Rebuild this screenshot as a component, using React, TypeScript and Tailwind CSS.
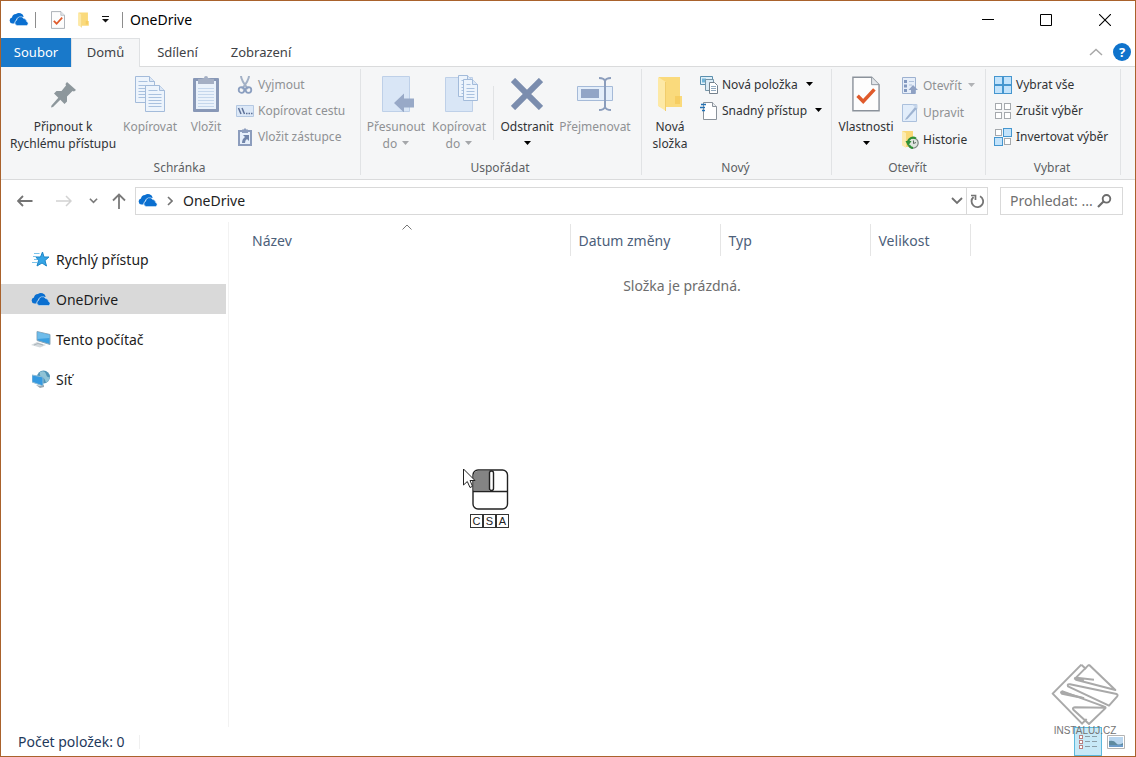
import type { ReactNode } from "react";

const text14 = "text-[14px] leading-[20px]";

function CloudIcon({ className = "w-5 h-4" }: { className?: string }) {
  return (
    <svg viewBox="0 0 20 14" className={className} aria-hidden="true">
      <path d="M5.6 11H3.4A3.2 3.2 0 0 1 .6 8a3.1 3.1 0 0 1 2.400-3A4.200 4.200 0 0 1 7 1.400 5.200 5.200 0 0 1 14.800 4.200L11 4.500A4.500 4.500 0 0 0 6.900 7.800 3.400 3.400 0 0 0 5.600 11Z" fill="#0a6fd0" />
      <path d="M8.400 13a2.700 2.700 0 0 1-.8-5.200 3.800 3.800 0 0 1 7-1.900 3.300 3.300 0 0 1 3 3.100 2.100 2.100 0 0 1 0 4Z" fill="#0a6fd0" stroke="#d5e9fa" strokeWidth=".6" />
    </svg>
  );
}

function CheckPageIcon({ className }: { className: string }) {
  return (
    <svg viewBox="0 0 30 38" className={className} aria-hidden="true">
      <path d="M1 1H21L29 9V37H1Z" fill="#fdfdfd" stroke="#8b929b" strokeWidth="1.500" />
      <path d="M21 1V9H29" fill="#e3e6ea" stroke="#8b929b" />
      <path d="M6 21l6 6L24 14" fill="none" stroke="#df5a2b" strokeWidth="3.800" />
    </svg>
  );
}

function FolderIcon({ className }: { className: string }) {
  return (
    <svg viewBox="0 0 26 36" className={className} aria-hidden="true">
      <path d="M2 1H23V20H25V31H8L2 31Z" fill="#fada7c" />
      <path d="M1 1l8 5v29L1 30Z" fill="#fde9a6" />
      <path d="M8.500 6v29" stroke="#f1cd6c" />
      <path d="M18 20h5v8h-5z" fill="#f6cd62" />
    </svg>
  );
}

function Caret({ className = "text-black" }: { className?: string }) {
  return (
    <svg viewBox="0 0 7 4" className={`inline-block h-1 w-[7px] shrink-0 ${className}`} aria-hidden="true">
      <path d="M0 0h7L3.500 4Z" fill="currentColor" />
    </svg>
  );
}

function PinIcon() {
  return (
    <svg viewBox="-1 0 28 28" className="h-7 w-7" aria-hidden="true">
      <path d="M17 2l9 8-2 1.500-1.500-.5-5.500 5.500v5l-2.500 2.500-4.200-4.200L3 27l-2 .5.5-2 6.800-7.700L4 13.500 6.500 11h5L16 5.500 15.500 4Z" fill="#8d979c" />
    </svg>
  );
}

function Page({ x, y, w, h }: { x: number; y: number; w: number; h: number }) {
  const lines = [];
  for (let i = 9; i < h - 2; i += 3) lines.push(i);
  return (
    <g>
      <path d={`M${x} ${y}h${w - 5}l5 5v${h - 5}h${-w}Z`} fill="#edf4fc" stroke="#a3bbda" />
      <path d={`M${x + w - 5} ${y}v5h5`} fill="#dce7f5" stroke="#a3bbda" />
      {lines.map((i) => (
        <path key={i} d={`M${x + 3} ${y + i}h${w - 6}`} stroke="#a9c1df" />
      ))}
      <path d={`M${x + 3} ${y + 5}h${w - 10}`} stroke="#a9c1df" />
    </g>
  );
}

function CopyIcon() {
  return (
    <svg viewBox="0 0 30 36" className="h-9 w-[30px]" aria-hidden="true">
      <Page x={0.5} y={0.5} w={19} h={26} />
      <Page x={10.5} y={9.5} w={19} h={26} />
    </svg>
  );
}

function PasteIcon() {
  return (
    <svg viewBox="0 0 26 38" className="h-[38px] w-[26px]" aria-hidden="true">
      <rect x="0" y="3" width="26" height="34" rx="1" fill="#8898b7" />
      <rect x="3" y="6" width="20" height="28" fill="#eaf2fb" />
      <path d="M5 4h3l3-1a2 2 0 0 1 4 0l3 1h3v5H5Z" fill="#a4afc4" />
      {[13, 16, 19, 22, 25, 28, 31].map((y) => (
        <path key={y} d={`M5 ${y}.5h16`} stroke="#c5d7ec" />
      ))}
    </svg>
  );
}

function MoveIcon() {
  return (
    <svg viewBox="-7 0 42 36" className="h-9 w-[42px]" aria-hidden="true">
      <path d="M.5.5h27v35H.5Z" fill="#d9e6f6" stroke="#bed0e8" />
      <path d="M12 27l10-9.500V22.500h10v9H22V36.500Z" fill="#98a9c7" />
    </svg>
  );
}

function CopyToIcon() {
  return (
    <svg viewBox="-7 0 42 38" className="h-[38px] w-[42px]" aria-hidden="true">
      <path d="M.5 2.500h27v34H.5Z" fill="#d9e6f6" stroke="#bed0e8" />
      <Page x={13.5} y={0.5} w={14} h={21} />
      <Page x={18.5} y={4.5} w={14} h={21} />
    </svg>
  );
}

function DeleteIcon() {
  return (
    <svg viewBox="0 0 32 32" className="h-8 w-8" aria-hidden="true">
      <path d="M2 2l28 28M30 2L2 30" stroke="#7b8dae" strokeWidth="6" />
    </svg>
  );
}

function RenameIcon() {
  return (
    <svg viewBox="0 0 37 34" className="h-[34px] w-[37px]" aria-hidden="true">
      <path d="M.5 9.500h35v14H.5Z" fill="#e4eefa" stroke="#a5bad8" />
      <path d="M4 12h18v9H4Z" fill="#92a5c6" />
      <path d="M22 1q5 0 6 3q1-3 6-3M28 4v26M22 33q5 0 6-3q1 3 6 3" fill="none" stroke="#8b9dbc" strokeWidth="2" />
    </svg>
  );
}

function ScissorsIcon() {
  return (
    <svg viewBox="0 0 16 18" className="h-[18px] w-4" aria-hidden="true">
      <path d="M4 0q0 4 7 13M12 0q0 4-7 13" fill="none" stroke="#a3b1c6" strokeWidth="2" />
      <circle cx="4.500" cy="14" r="2.800" fill="none" stroke="#8b9fc0" strokeWidth="1.800" />
      <circle cx="11.500" cy="14" r="2.800" fill="none" stroke="#8b9fc0" strokeWidth="1.800" />
    </svg>
  );
}

function PathIcon() {
  return (
    <svg viewBox="0 0 18 12" className="h-3 w-[18px]" aria-hidden="true">
      <path d="M.5.500h17v11H.5Z" fill="#dce8f7" stroke="#b4c8e2" />
      <path d="M2.500 3l2.500 6M6 3l2.500 6" stroke="#5e7198" strokeWidth="1.500" />
      <path d="M10 8.500h1.500M12.500 8.500H14M15 8.500h1.500" stroke="#5e7198" strokeWidth="1.300" />
    </svg>
  );
}

function ShortcutIcon() {
  return (
    <svg viewBox="0 0 14 18" className="h-[18px] w-3.5" aria-hidden="true">
      <path d="M1 3h12v14H1Z" fill="#e7f0fb" stroke="#8c9dbd" strokeWidth="2" />
      <path d="M4 1.500h1.500L7 0l1.500 1.500H10V5H4Z" fill="#8c9dbd" />
      <path d="M5 7h6v6l-2-2q-2 1-2 4H4q0-4 3-6Z" fill="#7185aa" />
    </svg>
  );
}

function NewItemIcon() {
  return (
    <svg viewBox="0 0 18 18" className="h-[18px] w-[18px]" aria-hidden="true">
      <path d="M.5.500h12v8H.5Z" fill="#dff0fa" stroke="#5b8fae" />
      <path d="M2 2.500h4v4H2Z" fill="#71b4d8" />
      <path d="M5.500 3.500h8v11h-8Z" fill="#dcebf5" stroke="#7595a8" />
      <path d="M9.500 6.500h5l3 3v8h-8Z" fill="#fff" stroke="#74818c" />
      <path d="M11 10.500h5M11 12.500h5M11 14.500h5" stroke="#91a9be" />
    </svg>
  );
}

function EasyAccessIcon() {
  return (
    <svg viewBox="0 0 18 18" className="h-[18px] w-[18px]" aria-hidden="true">
      <path d="M3.500.5h9l4 4v13h-13Z" fill="#fff" stroke="#8a929a" />
      <path d="M12.500.5v4h4" fill="#e9ecef" stroke="#8a929a" />
      <path d="M1 2.500h5M0 5.500h5M2 8.500h3" stroke="#2272b5" strokeWidth="1.500" />
    </svg>
  );
}

function OpenIcon() {
  return (
    <svg viewBox="0 0 16 18" className="h-[18px] w-4" aria-hidden="true">
      <path d="M.5.500h13v16H.5Z" fill="#e6eef9" stroke="#9db1d0" />
      <path d="M2 3h3v3H2zM2 7.500h3v3H2zM2 12h3v3H2z" fill="#8298bf" />
      <path d="M7 4.500h5M7 8h3" stroke="#b0c2dc" />
      <path d="M11 8l5 5h-3v4H9v-4H6.500Z" fill="#8fa1c3" />
    </svg>
  );
}

function EditIcon() {
  return (
    <svg viewBox="0 0 16 18" className="h-[18px] w-4" aria-hidden="true">
      <path d="M.5.500h14v17H.5Z" fill="#e2edfa" stroke="#abc0dc" />
      <path d="M4 14L13 3l2 1.500L5.500 15 3 16Z" fill="#9eb3d1" />
      <path d="M10 .5l5.500 4.500V.5Z" fill="#c4d4e9" />
    </svg>
  );
}

function HistoryIcon() {
  return (
    <svg viewBox="0 0 17 19" className="h-[19px] w-[17px]" aria-hidden="true">
      <path d="M0 1h11v16H3L0 15Z" fill="#f9d977" />
      <path d="M0 1l4 2v15l-4-3Z" fill="#fcebb0" />
      <circle cx="11" cy="13" r="5.200" fill="#dfe5df" stroke="#7c8780" strokeWidth="1.200" />
      <path d="M14 8.500a5.200 5.200 0 0 0-8 4M11 18a5 5 0 0 1-4-3" fill="none" stroke="#2f9136" strokeWidth="2" />
      <path d="M3.500 11h6L6 16Z" fill="#2f9136" />
      <path d="M11.500 10.500v3l2.500-1" fill="none" stroke="#5c6a62" />
    </svg>
  );
}

function SquaresIcon({ filled }: { filled: boolean[] }) {
  const spots = [
    [1, 1],
    [10, 1],
    [1, 10],
    [10, 10],
  ];
  return (
    <svg viewBox="0 0 18 18" className="h-[18px] w-[18px]" aria-hidden="true">
      {spots.map(([x, y], i) =>
        filled[i] ? (
          <rect key={i} x={x - 0.5} y={y - 0.5} width="8" height="8" fill="#c3e3fb" stroke="#4596cf" />
        ) : (
          <rect key={i} x={x + 0.5} y={y + 0.5} width="6" height="6" fill="#fff" stroke="#a5a9ad" />
        )
      )}
    </svg>
  );
}

function BigButton({
  icon,
  children,
  width,
  disabled,
}: {
  icon: ReactNode;
  children: ReactNode;
  width: string;
  disabled?: boolean;
}) {
  return (
    <button
      type="button"
      disabled={disabled}
      className={`flex flex-col items-center gap-1 whitespace-nowrap text-center leading-[17px] ${width} ${
        disabled ? "text-[#8f9194]" : "text-[#303235]"
      }`}
    >
      <span className="flex h-10 items-center justify-center">{icon}</span>
      <span>{children}</span>
    </button>
  );
}

function SmallButton({
  icon,
  label,
  disabled,
  caret,
  height = "h-[26px]",
}: {
  icon: ReactNode;
  label: string;
  disabled?: boolean;
  caret?: boolean;
  height?: string;
}) {
  return (
    <button
      type="button"
      disabled={disabled}
      className={`flex items-center gap-1 whitespace-nowrap ${height} ${disabled ? "text-[#8f9194]" : "text-[#303235]"}`}
    >
      <span className="flex w-[18px] justify-center">{icon}</span>
      <span>{label}</span>
      {caret && <Caret className={disabled ? "mb-0.5 ml-0.5 text-[#b0b2b5]" : "mb-0.5 ml-1 text-black"} />}
    </button>
  );
}

function Group({ title, width, children }: { title: string; width: string; children: ReactNode }) {
  return (
    <section
      aria-label={title}
      className={`flex shrink-0 flex-col border-r border-[#e1e3e5] ${width}`}
    >
      <div className="flex h-[92px] shrink-0 items-start pt-[3px]">{children}</div>
      <h2 className="pr-0.5 text-center leading-[14px] text-[#5c5f63]">{title}</h2>
    </section>
  );
}

function TitleBar() {
  return (
    <header className="flex h-[37px] items-center pl-2">
      <CloudIcon className="h-[15px] w-5" />
      <span className="ml-1.5 h-4 w-px bg-[#8d8d8d]" />
      <button type="button" aria-label="Vlastnosti" className="ml-[15px]">
        <CheckPageIcon className="h-[18px] w-[14px]" />
      </button>
      <button type="button" aria-label="Nová složka" className="ml-3">
        <FolderIcon className="h-4 w-[13px]" />
      </button>
      <button type="button" aria-label="Přizpůsobit" className="ml-3">
        <svg viewBox="0 0 7 7" className="h-[7px] w-[7px]">
          <path d="M0 .5h7" stroke="#111" />
          <path d="M0 3h7L3.500 6.500Z" fill="#111" />
        </svg>
      </button>
      <span className="ml-[13px] h-4 w-px bg-[#8d8d8d]" />
      <h1 className={`ml-[7px] flex-1 text-black ${text14}`}>OneDrive</h1>
      <button type="button" aria-label="Minimalizovat" className="flex h-full w-[58px] items-center justify-center">
        <svg viewBox="0 0 12 12" className="h-3 w-3">
          <path d="M0 5.500h12" stroke="#000" />
        </svg>
      </button>
      <button type="button" aria-label="Maximalizovat" className="flex h-full w-[58px] items-center justify-center">
        <svg viewBox="0 0 12 12" className="h-3 w-3">
          <path d="M.5.500h11v11H.5Z" fill="none" stroke="#000" />
        </svg>
      </button>
      <button type="button" aria-label="Zavřít" className="mr-px flex h-full w-[59px] items-center justify-center">
        <svg viewBox="0 0 12 12" className="h-3 w-3">
          <path d="M0 0l12 12M12 0L0 12" stroke="#000" strokeWidth="1.100" />
        </svg>
      </button>
    </header>
  );
}

function Tabs() {
  return (
    <nav className="flex h-[29px] items-stretch text-[13px] leading-[18px] text-[#404246]">
      <button type="button" className="w-[70px] border-b border-[#1979ca] bg-[#1979ca] text-white">
        Soubor
      </button>
      <button type="button" className="w-[69px] border-x border-t border-[#dfe1e3] bg-[#f5f6f7] pb-0.5">
        Domů
      </button>
      <div className="flex flex-1 items-center border-b border-[#dadbdc] pr-1">
        <button type="button" className="w-[75px]">Sdílení</button>
        <button type="button" className="w-[92px]">Zobrazení</button>
        <button type="button" aria-label="Sbalit pás karet" className="mr-2.5 ml-auto">
          <svg viewBox="0 0 14 8" className="h-2 w-3.5">
            <path d="M1 7l6-5.500L13 7" fill="none" stroke="#a8a8a8" strokeWidth="1.500" />
          </svg>
        </button>
        <button
          type="button"
          aria-label="Nápověda"
          className="h-[18px] w-[18px] rounded-full bg-[#0f73cc] text-center text-[13px] leading-[18px] font-bold text-white"
        >
          ?
        </button>
      </div>
    </nav>
  );
}

function Ribbon() {
  return (
    <div className="flex h-[113px] overflow-hidden border-b border-[#dadbdc] bg-[#f5f6f7] pt-0.5 pb-1 text-[12px]">
      <Group title="Schránka" width="w-[360px]">
        <div className="flex pt-0.5 pl-[7px]">
          <BigButton icon={<PinIcon />} width="w-[110px]">
            Připnout k<br />Rychlému přístupu
          </BigButton>
          <BigButton icon={<CopyIcon />} width="w-16" disabled>Kopírovat</BigButton>
          <BigButton icon={<PasteIcon />} width="w-12" disabled>Vložit</BigButton>
        </div>
        <div className="flex flex-col pl-1.5">
          <SmallButton icon={<ScissorsIcon />} label="Vyjmout" disabled />
          <SmallButton icon={<PathIcon />} label="Kopírovat cestu" disabled />
          <SmallButton icon={<ShortcutIcon />} label="Vložit zástupce" disabled />
        </div>
      </Group>
      <Group title="Uspořádat" width="w-[281px]">
        <div className="flex pt-0.5 pl-1">
          <BigButton icon={<MoveIcon />} width="w-[62px]" disabled>
            Přesunout<br />do <Caret className="mb-1 ml-0.5 text-[#a5a7aa]" />
          </BigButton>
          <BigButton icon={<CopyToIcon />} width="w-16" disabled>
            Kopírovat<br />do <Caret className="mb-1 ml-0.5 text-[#a5a7aa]" />
          </BigButton>
          <span className="mt-3 mr-[3px] ml-0.5 h-[54px] w-px bg-[#e1e3e5]" />
          <BigButton icon={<DeleteIcon />} width="w-[60px]">
            Odstranit<br /><Caret className="mb-1 text-black" />
          </BigButton>
          <BigButton icon={<RenameIcon />} width="w-[76px]" disabled>Přejmenovat</BigButton>
        </div>
      </Group>
      <Group title="Nový" width="w-[190px]">
        <div className="flex pt-0.5 pl-1.5">
          <BigButton icon={<FolderIcon className="h-9 w-[26px]" />} width="w-11">
            Nová<br />složka
          </BigButton>
        </div>
        <div className="flex flex-col pl-2">
          <SmallButton icon={<NewItemIcon />} label="Nová položka" caret />
          <SmallButton icon={<EasyAccessIcon />} label="Snadný přístup" caret />
        </div>
      </Group>
      <Group title="Otevřít" width="w-[154px]">
        <div className="flex pt-0.5 pl-1">
          <BigButton icon={<CheckPageIcon className="h-9 w-7" />} width="w-[60px]">
            Vlastnosti<br /><Caret className="mb-1 text-black" />
          </BigButton>
        </div>
        <div className="flex flex-col pl-[5px]">
          <SmallButton icon={<OpenIcon />} label="Otevřít" height="h-[27px]" disabled caret />
          <SmallButton icon={<EditIcon />} label="Upravit" height="h-[27px]" disabled />
          <SmallButton icon={<HistoryIcon />} label="Historie" height="h-[27px]" />
        </div>
      </Group>
      <Group title="Vybrat" width="w-[135px]">
        <div className="flex flex-col pl-2">
          <SmallButton icon={<SquaresIcon filled={[true, true, true, true]} />} label="Vybrat vše" />
          <SmallButton icon={<SquaresIcon filled={[false, false, false, false]} />} label="Zrušit výběr" />
          <SmallButton icon={<SquaresIcon filled={[false, true, true, false]} />} label="Invertovat výběr" />
        </div>
      </Group>
    </div>
  );
}

function AddressRow() {
  return (
    <div className="flex h-[42px] items-center pr-3 pl-4">
      <button type="button" aria-label="Zpět">
        <svg viewBox="0 0 16 12" className="h-3 w-4">
          <path d="M15.500 6H1M6 1L1 6l5 5" fill="none" stroke="#747474" strokeWidth="1.800" />
        </svg>
      </button>
      <button type="button" aria-label="Vpřed" className="ml-[23px]">
        <svg viewBox="0 0 16 12" className="h-3 w-4">
          <path d="M0 6h15M10 1l5 5-5 5" fill="none" stroke="#d2d2d2" strokeWidth="1.500" />
        </svg>
      </button>
      <button type="button" aria-label="Poslední umístění" className="ml-[17px]">
        <svg viewBox="0 0 10 6" className="h-1.5 w-[9px]">
          <path d="M1 .5l4 4 4-4" fill="none" stroke="#7a7a7a" strokeWidth="1.800" />
        </svg>
      </button>
      <button type="button" aria-label="Nahoru" className="ml-3.5">
        <svg viewBox="0 0 14 16" className="h-4 w-3.5">
          <path d="M7 16V1.500M1 7.500l6-6 6 6" fill="none" stroke="#7a7a7a" strokeWidth="1.800" />
        </svg>
      </button>
      <div className="ml-[9px] flex h-7 flex-1 items-center border border-[#d9d9d9]">
        <CloudIcon className="mb-0.5 ml-0.5 h-[15px] w-5" />
        <svg viewBox="0 0 6 10" className="ml-[9px] h-2.5 w-1.5" aria-hidden="true">
          <path d="M1 1l4 4-4 4" fill="none" stroke="#747474" strokeWidth="1.600" />
        </svg>
        <a href="#onedrive" className={`ml-2.5 flex-1 text-[#222] ${text14}`}>OneDrive</a>
        <button type="button" aria-label="Předchozí umístění" className="mr-[3px]">
          <svg viewBox="0 0 12 8" className="h-2 w-3">
            <path d="M1 1l5 5 5-5" fill="none" stroke="#707070" strokeWidth="1.800" />
          </svg>
        </button>
        <button
          type="button"
          aria-label="Aktualizovat"
          className="flex h-full w-[21px] items-center justify-center border-l border-[#d9d9d9]"
        >
          <svg viewBox="0 0 14 16" className="h-4 w-3.5">
            <path d="M10 3.200A5.800 5.800 0 1 1 3.500 4" fill="none" stroke="#757575" strokeWidth="1.800" />
            <path d="M1 2.500h4.500V7" fill="none" stroke="#757575" strokeWidth="1.700" />
          </svg>
        </button>
      </div>
      <form className="ml-3 flex h-7 w-[123px] items-center border border-[#d9d9d9]" onSubmit={(e) => e.preventDefault()}>
        <input
          type="text"
          aria-label="Prohledat"
          placeholder="Prohledat: ..."
          className={`w-24 bg-transparent pl-[9px] text-[#333] outline-none placeholder:text-[#707070] ${text14}`}
        />
        <button type="submit" aria-label="Hledat">
          <svg viewBox="0 0 15 14" className="h-3.5 w-[15px]">
            <circle cx="9.500" cy="4.800" r="3.800" fill="none" stroke="#6c6c6c" strokeWidth="1.900" />
            <path d="M6.500 7.500L1 13" stroke="#6c6c6c" strokeWidth="2.200" />
          </svg>
        </button>
      </form>
    </div>
  );
}

function StarIcon() {
  return (
    <svg viewBox="0 0 18 16" className="h-4 w-[18px]" aria-hidden="true">
      <path d="M10.500 1l1.500 5H17l-4 3.500 1.500 5.500L10 12l-5 3 1.500-5.500L4 6h4.500Z" fill="#35a5e6" stroke="#1f86c7" />
      <path d="M2 2.500h5.500M1 5.500h4M2 8.500h3M0 11.500h5" stroke="#7cc3ea" />
    </svg>
  );
}

function ComputerIcon() {
  return (
    <svg viewBox="0 0 20 17" className="h-[17px] w-5" aria-hidden="true">
      <path d="M6 .5l13 3v10L6 9.500Z" fill="#3b9fe0" stroke="#8fa9ba" />
      <path d="M6.500 1l12 3v3l-12 1Z" fill="#6fbcea" />
      <path d="M0 14l6-3 9 3-6 2.500Z" fill="#d3d9dd" />
      <path d="M3 14l4-1.500 5 1.500" stroke="#aab4ba" fill="none" />
    </svg>
  );
}

function NetworkIcon() {
  return (
    <svg viewBox="0 0 19 18" className="h-[18px] w-[19px]" aria-hidden="true">
      <circle cx="11.500" cy="7" r="6.500" fill="#4f93b6" />
      <path d="M8 2q5-2 6 2t4 3q-1 4-4 6-1-5-4-6T8 2Z" fill="#8fc3d6" />
      <path d="M0 5l11 2v9L0 12Z" fill="#3499e0" stroke="#8fbcd5" />
      <path d="M4 15l5 1 3-1v2l-4 1Z" fill="#9aa9b2" />
    </svg>
  );
}

const places = [
  { label: "Rychlý přístup", icon: <StarIcon /> },
  { label: "OneDrive", icon: <CloudIcon className="h-[15px] w-5" />, active: true },
  { label: "Tento počítač", icon: <ComputerIcon /> },
  { label: "Síť", icon: <NetworkIcon /> },
];

function Sidebar() {
  return (
    <nav className="w-[228px] shrink-0 border-r border-[#f2f2f2] pt-[22px] pr-0.5">
      <ul className="flex flex-col gap-2.5">
        {places.map((p) => (
          <li key={p.label}>
            <a
              href="#place"
              className={`flex h-[30px] items-center gap-[5px] pl-[30px] text-[#1c1c1c] ${text14} ${
                p.active ? "bg-[#d9d9d9]" : ""
              }`}
            >
              <span className="flex w-5 justify-center">{p.icon}</span>
              <span className="pt-0.5">{p.label}</span>
            </a>
          </li>
        ))}
      </ul>
    </nav>
  );
}

function FileList() {
  return (
    <main className="flex-1">
      <table className={`mt-0.5 w-full table-fixed border-collapse ${text14}`}>
        <thead>
          <tr className="h-8 text-left text-[#4c607a]">
            <th scope="col" className="relative w-[341px] border-r border-[#e5e5e5] pt-0.5 pl-[23px] font-normal">
              Název
              <svg viewBox="0 0 10 6" className="absolute top-0 left-1/2 ml-[3px] h-1.5 w-[10px]" aria-hidden="true">
                <path d="M.5 5.500L5 1l4.500 4.500" fill="none" stroke="#777" />
              </svg>
            </th>
            <th scope="col" className="w-[150px] border-r border-[#e5e5e5] pt-0.5 pl-2 font-normal">Datum změny</th>
            <th scope="col" className="w-[150px] border-r border-[#e5e5e5] pt-0.5 pl-2 font-normal">Typ</th>
            <th scope="col" className="w-[100px] border-r border-[#e5e5e5] pt-0.5 pl-2 font-normal">Velikost</th>
            <td />
          </tr>
        </thead>
        <tbody>
          <tr>
            <td colSpan={5} className="pt-5 text-center text-[#6d6d6d]">Složka je prázdná.</td>
          </tr>
        </tbody>
      </table>
    </main>
  );
}

function StatusBar() {
  return (
    <footer className={`flex h-[29px] items-center pr-2.5 pl-[17px] text-[#1e395b] ${text14}`}>
      <span>Počet položek: 0</span>
      <span className="ml-3.5 h-3.5 w-px bg-[#f0f0f0]" />
      <button
        type="button"
        aria-label="Podrobnosti"
        className="ml-auto flex h-full w-7 items-center justify-center border border-[#5bb9dd] bg-[#c7e9f7]"
      >
        <svg viewBox="0 0 20 16" className="h-4 w-5">
          {[1, 6, 11].map((y) => (
            <g key={y}>
              <rect x="1.500" y={y + 0.5} width="3" height="3" fill="#fff" stroke="#b98080" />
              <path d={`M7 ${y + 1.5}h5M14 ${y + 1.5}h5`} stroke="#8b9da6" />
            </g>
          ))}
        </svg>
      </button>
      <button type="button" aria-label="Velké ikony" className="ml-[5px]">
        <svg viewBox="0 0 18 14" className="h-3.5 w-[18px]">
          <path d="M.5.500h17v13H.5Z" fill="#fff" stroke="#b4b4b4" />
          <path d="M2 2h14v10H2Z" fill="#b9d6ef" />
          <path d="M2 6q5-1 7 2t7 0v3H2Z" fill="#5f8a9f" />
          <path d="M2 10h14v2H2Z" fill="#6c9bc9" />
        </svg>
      </button>
    </footer>
  );
}

function MouseOverlay() {
  return (
    <div className="pointer-events-none absolute top-[467px] left-[461px] flex flex-col items-end">
      <svg viewBox="0 0 48 44" className="h-11 w-12" aria-hidden="true">
        <rect x="11" y="2" width="34.500" height="39" rx="5" fill="#fff" stroke="#222" strokeWidth="1.400" />
        <path d="M16 2.700h11v20H11.700V7a5 5 0 0 1 4.300-4.300Z" fill="#848484" />
        <path d="M11 23.500h34.500" stroke="#222" strokeWidth="1.400" />
        <rect x="27.500" y="3" width="4" height="19.500" rx="2" fill="#fff" stroke="#222" strokeWidth="1.400" />
        <path d="M1.500 1v16l3.800-3.500 2.700 6 2.500-1.200-2.500-5.800h5Z" fill="#fff" stroke="#222" />
      </svg>
      <div className="mt-0.5 flex pr-px font-['Liberation_Sans',sans-serif] text-[11px] leading-[12px] text-[#222]">
        {["C", "S", "A"].map((k) => (
          <span key={k} className="w-[13px] border border-[#333] text-center">{k}</span>
        ))}
      </div>
    </div>
  );
}

function Watermark() {
  return (
    <div className="pointer-events-none absolute right-4 bottom-[19px] flex flex-col items-center">
      <svg viewBox="46 22 204 186" className="h-[62px] w-[68px]" aria-hidden="true">
        <g fill="none" stroke="#a9a9a9" strokeWidth="6" strokeLinejoin="round">
          <path d="M137 27L51 114l88 90 14-14" />
          <path d="M137 27l14 13" />
          <path d="M160 27l79 76-118-31q-5-4 2-6l52 6" />
          <path d="M160 27l-42 42" />
          <path d="M145 74l-30-6" />
          <path d="M97 92q-3-8 6-6l140 29q5 3 1 8l-24 27L97 92Z" />
          <path d="M145 128l-66-14q-6-5 2-7l125 46q6 2 2 6l-48 46-46-42q-6-7 4-8l94 1" />
          <path d="M75 109l70 19" />
        </g>
      </svg>
      <span className="font-['Liberation_Sans',sans-serif] text-[10px] leading-[12px] text-[#747474]">INSTALUJ.CZ</span>
    </div>
  );
}

export default function App() {
  return (
    <div className="relative flex min-h-screen flex-col border border-[#a9622c] bg-white font-['Noto_Sans','Open_Sans',sans-serif]">
      <TitleBar />
      <Tabs />
      <Ribbon />
      <AddressRow />
      <div className="flex flex-1">
        <Sidebar />
        <FileList />
      </div>
      <StatusBar />
      <MouseOverlay />
      <Watermark />
    </div>
  );
}
